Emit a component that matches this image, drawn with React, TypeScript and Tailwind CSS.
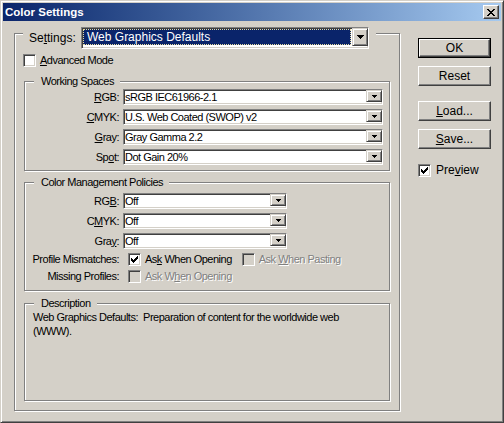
import React from "react";

const font = "font-['Liberation_Sans',Arial,sans-serif]";
const sunken =
  "border border-t-[#808080] border-l-[#808080] border-r-white border-b-white shadow-[inset_1px_1px_0_#404040,inset_-1px_-1px_0_#d4d0c8]";
const raised =
  "border border-t-[#d4d0c8] border-l-[#d4d0c8] border-r-[#404040] border-b-[#404040] shadow-[inset_1px_1px_0_#ffffff,inset_-1px_-1px_0_#808080]";
const pushBtn =
  "border border-t-white border-l-white border-r-[#404040] border-b-[#404040] shadow-[inset_-1px_-1px_0_#808080]";
const etched = "border border-[#808080] shadow-[inset_1px_1px_0_#ffffff,1px_1px_0_#ffffff]";
const small = "text-[11px] leading-[13px] tracking-[-0.5px]";
const disabledText = "text-[#808080] [text-shadow:1px_1px_0_#ffffff]";

// classic 7x7 check glyph
function Check() {
  const tops = [2, 3, 4, 3, 2, 1, 0];
  return (
    <svg width="7" height="7" shapeRendering="crispEdges">
      {tops.map((y, x) => (
        <rect key={x} x={x} y={y} width="1" height="3" fill="#000" />
      ))}
    </svg>
  );
}

function Arrow({ size }: { size: number }) {
  const rows = Math.ceil(size / 2);
  return (
    <svg width={size} height={rows} shapeRendering="crispEdges">
      {Array.from({ length: rows }).map((_, i) => (
        <rect key={i} x={i} y={i} width={size - 2 * i} height="1" fill="#000" />
      ))}
    </svg>
  );
}

function CloseGlyph() {
  const rows = ["XX....XX", ".XX..XX.", "..XXXX..", "...XX...", "..XXXX..", ".XX..XX.", "XX....XX"];
  return (
    <svg width="8" height="7" shapeRendering="crispEdges">
      {rows.map((r, y) =>
        r.split("").map((c, x) => (c === "X" ? <rect key={`${x}-${y}`} x={x} y={y} width="1" height="1" fill="#000" /> : null))
      )}
    </svg>
  );
}

function CheckBox({ checked, disabled }: { checked?: boolean; disabled?: boolean }) {
  return (
    <div
      className={`w-[13px] h-[13px] shrink-0 flex items-center justify-center ${sunken} ${
        disabled ? "bg-[#d4d0c8]" : "bg-white"
      }`}
    >
      {checked && <Check />}
    </div>
  );
}

function Combo({ value, className }: { value: string; className: string }) {
  return (
    <div className={`flex h-[16px] bg-white ${sunken} ${className}`}>
      <div className={`flex-1 pl-[1px] ${small} tracking-[-0.4px] flex items-center whitespace-nowrap overflow-hidden`}>
        {value}
      </div>
      <div className={`w-[16px] h-[12px] bg-[#d4d0c8] flex items-center justify-center ${raised}`}>
        <Arrow size={5} />
      </div>
    </div>
  );
}

function GroupLabel({ children }: { children: React.ReactNode }) {
  return (
    <div className={`absolute left-[9px] top-[-7px] bg-[#d4d0c8] pl-[7px] pr-[6px] ${small}`}>{children}</div>
  );
}

function Row({ label, children }: { label: React.ReactNode; children: React.ReactNode }) {
  return (
    <div className="flex items-center h-[16px]">
      <div className={`w-[94px] text-right ${small}`}>{label}</div>
      <div className="ml-[4px] flex items-center">{children}</div>
    </div>
  );
}

function Button({ children, def }: { children: React.ReactNode; def?: boolean }) {
  if (def) {
    return (
      <div className="w-[73px] h-[20px] border border-black">
        <div className={`w-full h-full flex items-center justify-center text-[12px] ${pushBtn}`}>{children}</div>
      </div>
    );
  }
  return (
    <div className={`w-[73px] h-[20px] flex items-center justify-center text-[12px] ${pushBtn}`}>{children}</div>
  );
}

export default function App() {
  return (
    <div
      className={`w-[504px] h-[423px] bg-[#d4d0c8] text-black ${font} flex flex-col p-[2px] border border-t-[#d4d0c8] border-l-[#d4d0c8] border-r-[#404040] border-b-[#404040] shadow-[inset_1px_1px_0_#ffffff,inset_-1px_-1px_0_#808080]`}
    >
      {/* title bar */}
      <div className="h-[18px] shrink-0 flex items-center justify-between bg-linear-to-r from-[#0a246a] to-[#a6caf0]">
        <span className="pl-[2px] text-white font-bold text-[11.5px] leading-[14px]">Color Settings</span>
        <div className={`mr-[2px] w-[16px] h-[14px] bg-[#d4d0c8] flex items-center justify-center ${pushBtn}`}>
          <CloseGlyph />
        </div>
      </div>

      <div className="flex items-start pl-[11px] pt-[12px]">
        {/* settings group */}
        <div className={`relative w-[386px] h-[378px] flex flex-col ${etched}`}>
          <div className="absolute left-[8px] top-[-7px] flex items-center bg-[#d4d0c8] pl-[6px] pr-[7px]">
            <span className="w-[52px] text-[12px] leading-[14px]">
              Se<u>t</u>tings:
            </span>
            <div className={`w-[288px] h-[22px] bg-white ${sunken}`}>
              <div className="flex h-[18px] pl-[1px]">
                <div className="flex-1 my-[1px] mr-[1px] bg-[#0a246a] border border-dotted border-[#e8dca0] flex items-center pl-[3px] text-white text-[12px] leading-[14px]">
                  Web Graphics Defaults
                </div>
                <div className={`w-[16px] h-[18px] bg-[#d4d0c8] flex items-center justify-center ${raised}`}>
                  <Arrow size={7} />
                </div>
              </div>
            </div>
          </div>

          <div className="mt-[20px] ml-[8px] flex items-center">
            <CheckBox />
            <span className={`ml-[4px] ${small}`}>
              <u>A</u>dvanced Mode
            </span>
          </div>

          {/* working spaces */}
          <div className={`relative mt-[14px] ml-[9px] w-[366px] h-[90px] pt-[7px] flex flex-col gap-[4px] ${etched}`}>
            <GroupLabel>Working Spaces</GroupLabel>
            <Row label={<><u>R</u>GB:</>}>
              <Combo value="sRGB IEC61966-2.1" className="w-[260px]" />
            </Row>
            <Row label={<><u>C</u>MYK:</>}>
              <Combo value="U.S. Web Coated (SWOP) v2" className="w-[260px]" />
            </Row>
            <Row label={<><u>G</u>ray:</>}>
              <Combo value="Gray Gamma 2.2" className="w-[260px]" />
            </Row>
            <Row label={<>Sp<u>o</u>t:</>}>
              <Combo value="Dot Gain 20%" className="w-[260px]" />
            </Row>
          </div>

          {/* color management policies */}
          <div className={`relative mt-[11px] ml-[9px] w-[366px] h-[109px] pt-[10px] flex flex-col gap-[4px] ${etched}`}>
            <GroupLabel>Color Management Policies</GroupLabel>
            <Row label={<>RG<u>B</u>:</>}>
              <Combo value="Off" className="w-[164px]" />
            </Row>
            <Row label={<>C<u>M</u>YK:</>}>
              <Combo value="Off" className="w-[164px]" />
            </Row>
            <Row label={<>Gra<u>y</u>:</>}>
              <Combo value="Off" className="w-[164px]" />
            </Row>
            <div className="flex items-center h-[13px]">
              <div className={`w-[94px] text-right ${small}`}>Profile Mismatches:</div>
              <div className="ml-[9px] flex items-center">
                <CheckBox checked />
                <span className={`ml-[4px] ${small}`}>
                  As<u>k</u> When Opening
                </span>
                <div className="ml-[10px]">
                  <CheckBox disabled />
                </div>
                <span className={`ml-[4px] ${small} ${disabledText}`}>
                  Ask <u>W</u>hen Pasting
                </span>
              </div>
            </div>
            <div className="flex items-center h-[13px]">
              <div className={`w-[94px] text-right ${small}`}>Missing Profiles:</div>
              <div className="ml-[9px] flex items-center">
                <CheckBox disabled />
                <span className={`ml-[4px] ${small} ${disabledText}`}>
                  Ask W<u>h</u>en Opening
                </span>
              </div>
            </div>
          </div>

          {/* description */}
          <div className={`relative mt-[12px] ml-[9px] w-[366px] h-[98px] pt-[6px] pl-[8px] ${etched}`}>
            <GroupLabel>Description</GroupLabel>
            <p className={`text-[11px] leading-[14px] tracking-[-0.5px] whitespace-pre`}>
              {"Web Graphics Defaults:  Preparation of content for the worldwide web"}
              <br />
              {"(WWW)."}
            </p>
          </div>
        </div>

        {/* buttons */}
        <div className="ml-[18px] mt-[5px] flex flex-col w-[73px]">
          <Button def>OK</Button>
          <div className="mt-[8px]">
            <Button>Reset</Button>
          </div>
          <div className="mt-[15px]">
            <Button>
              <span>
                <u>L</u>oad...
              </span>
            </Button>
          </div>
          <div className="mt-[8px]">
            <Button>
              <span>
                <u>S</u>ave...
              </span>
            </Button>
          </div>
          <div className="mt-[14px] flex items-center">
            <CheckBox checked />
            <span className="ml-[5px] text-[12px] leading-[14px]">
              Pre<u>v</u>iew
            </span>
          </div>
        </div>
      </div>
    </div>
  );
}
